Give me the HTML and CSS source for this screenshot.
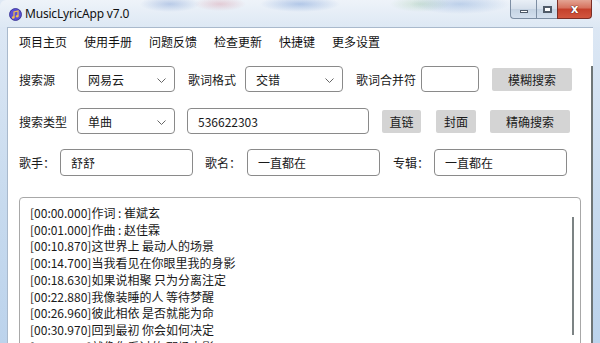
FILE: index.html
```html
<!DOCTYPE html>
<html lang="zh-CN">
<head>
    <meta charset="UTF-8">
    <title>MusicLyricApp v7.0</title>
    <link rel="stylesheet" href="styles.css">
</head>
<body>
    <div class="window">
        <div class="titlebar">
            <svg class="app-icon" width="13" height="13" viewBox="0 0 13 13">
                <circle cx="6.5" cy="6.5" r="6" fill="#5b4fd6"/>
                <circle cx="6.5" cy="6.5" r="6" fill="none" stroke="#2e2a8c" stroke-width="0.8"/>
                <path d="M5 9.5V4l4-1v5" fill="none" stroke="#f4c24a" stroke-width="1.2"/>
                <circle cx="4.2" cy="9.5" r="1.3" fill="#f4c24a"/>
                <circle cx="8.2" cy="8.3" r="1.3" fill="#f4c24a"/>
            </svg>
            <span class="title">MusicLyricApp v7.0</span>
            <div class="caption-btns">
                <div class="cap-btn min"><span></span></div>
                <div class="cap-btn max"><span></span></div>
                <div class="cap-btn close">x</div>
            </div>
        </div>
        <div class="frame">
            <div class="client">
                <ul class="menu">
                    <li>项目主页</li>
                    <li>使用手册</li>
                    <li>问题反馈</li>
                    <li>检查更新</li>
                    <li>快捷键</li>
                    <li>更多设置</li>
                </ul>

                <div class="row row-1">
                    <label class="lbl lbl-wide">搜索源</label>
                    <div class="select">网易云<svg class="chev" width="9" height="5" viewBox="0 0 9 5"><path d="M0.5 0.5l4 4 4-4" fill="none" stroke="#666" stroke-width="1"/></svg></div>
                    <label class="lbl gap-13" style="width:57px">歌词格式</label>
                    <div class="select">交错<svg class="chev" width="9" height="5" viewBox="0 0 9 5"><path d="M0.5 0.5l4 4 4-4" fill="none" stroke="#666" stroke-width="1"/></svg></div>
                    <label class="lbl gap-13" style="width:65px">歌词合并符</label>
                    <div class="input" style="width:58px"></div>
                    <button class="btn btn-wide gap-13">模糊搜索</button>
                </div>

                <div class="row row-2">
                    <label class="lbl lbl-wide">搜索类型</label>
                    <div class="select">单曲<svg class="chev" width="9" height="5" viewBox="0 0 9 5"><path d="M0.5 0.5l4 4 4-4" fill="none" stroke="#666" stroke-width="1"/></svg></div>
                    <div class="input id-input">536622303</div>
                    <button class="btn gap-13" style="width:39px">直链</button>
                    <button class="btn" style="width:40px;margin-left:15px">封面</button>
                    <button class="btn btn-wide" style="margin-left:14px">精确搜索</button>
                </div>

                <div class="row row-3">
                    <label class="lbl" style="width:41px">歌手：</label>
                    <div class="input info-input">舒舒</div>
                    <label class="lbl" style="width:42px;margin-left:12px">歌名：</label>
                    <div class="input info-input">一直都在</div>
                    <label class="lbl gap-13" style="width:41px">专辑：</label>
                    <div class="input info-input">一直都在</div>
                </div>

                <div class="lyrics">
                    <p>[00:00.000]作词 : 崔斌玄</p>
                    <p>[00:01.000]作曲 : 赵佳霖</p>
                    <p>[00:10.870]这世界上 最动人的场景</p>
                    <p>[00:14.700]当我看见在你眼里我的身影</p>
                    <p>[00:18.630]如果说相聚 只为分离注定</p>
                    <p>[00:22.880]我像装睡的人 等待梦醒</p>
                    <p>[00:26.960]彼此相依 是否就能为命</p>
                    <p>[00:30.970]回到最初 你会如何决定</p>
                    <p>[00:35.040]就像你看过的 那场电影</p>
                    <div class="lyrics-scroll"></div>
                </div>
                <div class="client-scroll"></div>
            </div>
        </div>
    </div>
</body>
</html>
```

FILE: styles.css
```css
* {
    margin: 0;
    padding: 0;
    box-sizing: border-box;
}

body {
    width: 600px;
    height: 343px;
    overflow: hidden;
    background: #fff;
    font-family: "Noto Sans CJK SC", "Noto Sans", sans-serif;
    font-size: 12px;
    color: #1a1a1a;
}

.window {
    width: 600px;
    height: 343px;
    display: flex;
    flex-direction: column;
    background: linear-gradient(180deg, #dfe9f5 0%, #c7daee 60%, #bcd3ec 100%);
}

/* title bar with the aero glass look */
.titlebar {
    height: 27px;
    flex-shrink: 0;
    display: flex;
    align-items: center;
    padding-left: 9px;
    position: relative;
    background:
        radial-gradient(ellipse 30px 8px at 170px 4px, rgba(90, 130, 200, 0.35), transparent),
        radial-gradient(ellipse 26px 7px at 220px 4px, rgba(200, 90, 110, 0.25), transparent),
        radial-gradient(ellipse 40px 8px at 300px 4px, rgba(70, 120, 200, 0.35), transparent),
        radial-gradient(ellipse 30px 8px at 420px 4px, rgba(120, 180, 120, 0.25), transparent),
        radial-gradient(ellipse 50px 10px at 460px 4px, rgba(80, 130, 200, 0.3), transparent),
        linear-gradient(180deg, #eef3f9 0%, #dde8f4 100%);
    border-radius: 6px 6px 0 0;
}

.app-icon {
    margin-top: 1px;
}

.title {
    font-family: "Noto Sans", sans-serif;
    font-size: 12px;
    margin-left: 3px;
    color: #111;
    letter-spacing: -0.2px;
}

.caption-btns {
    position: absolute;
    top: 0;
    right: 8px;
    display: flex;
}

.cap-btn {
    height: 19px;
    border: 1px solid #7d8ea3;
    border-top: none;
    display: flex;
    align-items: center;
    justify-content: center;
    background: linear-gradient(180deg, #e9eff6 0%, #d5dfeb 50%, #c4d2e2 51%, #d4e0ee 100%);
}

.cap-btn.min {
    width: 26px;
    border-radius: 0 0 0 4px;
    border-right: none;
}

.cap-btn.min span {
    width: 8px;
    height: 3px;
    margin-top: 5px;
    background: #fff;
    border: 1px solid #4f5a68;
}

.cap-btn.max {
    width: 21px;
    border-right: none;
}

.cap-btn.max span {
    width: 9px;
    height: 7px;
    background: #fff;
    border: 1px solid #4f5a68;
    box-shadow: inset 0 0 0 1px #4f5a68;
}

.cap-btn.close {
    width: 35px;
    border-color: #7b2e26;
    border-radius: 0 0 4px 0;
    background: linear-gradient(180deg, #e3a493 0%, #d6705c 45%, #c4402b 50%, #d2563f 100%);
    color: #fff;
    font-family: "DejaVu Sans", sans-serif;
    font-weight: bold;
    font-size: 12px;
    line-height: 1;
    text-shadow: 0 0 1px #4a1410, 0 0 1px #4a1410;
}

.frame {
    flex: 1;
    min-height: 0;
    overflow: hidden;
    padding: 0 0 0 7px;
    display: flex;
}

.client {
    flex: 1;
    position: relative;
    background: #fff;
    border-top: 1px solid #a9b9cc;
    border-left: 1px solid #a9b9cc;
    margin-right: 7px;
    padding-left: 11px;
}

.menu {
    list-style: none;
    display: flex;
    height: 26px;
    align-items: center;
}

.menu li {
    margin-right: 17px;
    color: #111;
}

.row {
    display: flex;
    align-items: center;
}

.row-1 {
    margin-top: 12px;
}

.row-2 {
    margin-top: 16px;
}

.row-3 {
    margin-top: 15px;
}

.lbl {
    flex-shrink: 0;
    white-space: nowrap;
}

.lbl-wide {
    width: 58px;
}

.gap-13 {
    margin-left: 13px;
}

.select,
.input {
    height: 26px;
    border: 1px solid #8a8a8a;
    border-radius: 4px;
    display: flex;
    align-items: center;
    padding-left: 10px;
    background: #fff;
    flex-shrink: 0;
}

.select {
    width: 98px;
    position: relative;
}

.chev {
    position: absolute;
    right: 8px;
    top: 11px;
}

.id-input {
    width: 182px;
    margin-left: 12px;
}

.row-3 .input {
    height: 27px;
}

.info-input {
    width: 133px;
}

.btn {
    height: 23px;
    border: none;
    border-radius: 2px;
    background: #d4d4d4;
    font-family: inherit;
    font-size: 12px;
    color: #1a1a1a;
    flex-shrink: 0;
}

.btn-wide {
    width: 80px;
}

.lyrics {
    position: relative;
    margin-top: 21px;
    width: 562px;
    height: 160px;
    border: 1px solid #a8a8a8;
    border-radius: 4px;
    padding: 7px 0 0 10px;
    line-height: 16.7px;
    overflow: hidden;
}

.lyrics-scroll {
    position: absolute;
    right: 6px;
    top: 19px;
    width: 2px;
    height: 118px;
    background: #7c8384;
}

.client-scroll {
    position: absolute;
    right: 0;
    top: 38px;
    bottom: 0;
    width: 2px;
    background: #6f7677;
}
```
